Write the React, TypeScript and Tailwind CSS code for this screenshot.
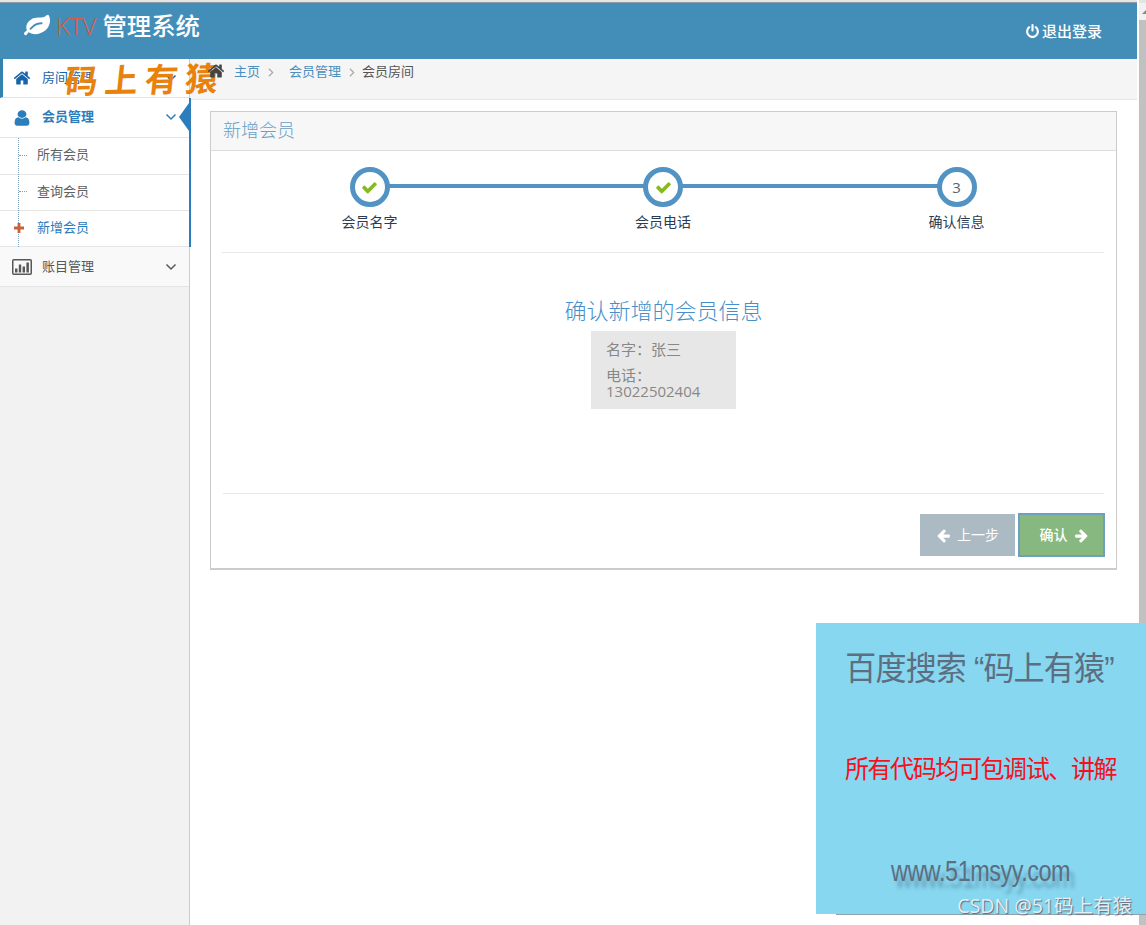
import type { ReactNode } from 'react';

const ICONS = {
  home: 'M1472 992v480q0 26-19 45t-45 19h-384v-384h-256v384h-384q-26 0-45-19t-19-45v-480q0-1 .5-3t.5-3l575-474 575 474q1 2 1 6zm223-69l-62 74q-8 9-21 11h-3q-13 0-21-7l-692-577-692 577q-12 8-24 7-13-2-21-11l-62-74q-8-10-7-23.5t11-21.5l719-599q32-26 76-26t76 26l244 204v-195q0-14 9-23t23-9h192q14 0 23 9t9 23v408l219 182q10 8 11 21.5t-7 23.5z',
  user: 'M1536 1399q0 109-62.5 187t-150.5 78h-854q-88 0-150.5-78t-62.5-187q0-85 8.5-160.5t31.5-152 58.5-131 94-89 134.5-34.5q131 128 313 128t313-128q76 0 134.5 34.5t94 89 58.5 131 31.5 152 8.5 160.5zm-256-887q0 159-112.5 271.5t-271.5 112.5-271.5-112.5-112.5-271.5 112.5-271.5 271.5-112.5 271.5 112.5 112.5 271.5z',
  check: 'M1671 566q0 40-28 68l-724 724-136 136q-28 28-68 28t-68-28l-136-136-362-362q-28-28-28-68t28-68l136-136q28-28 68-28t68 28l294 295 656-657q28-28 68-28t68 28l136 136q28 28 28 68z',
  arrowLeft: 'M1664 896v128q0 53-32.5 90.5t-84.5 37.5h-704l293 294q38 36 38 90t-38 90l-75 76q-37 37-90 37-52 0-91-37l-651-652q-37-37-37-90 0-52 37-91l651-650q38-38 91-38 52 0 90 38l75 74q38 38 38 91t-38 91l-293 293h704q52 0 84.5 37.5t32.5 90.5z',
  arrowRight: 'M1600 960q0 54-37 91l-651 651q-39 37-91 37-51 0-90-37l-75-75q-38-38-38-91t38-91l293-293h-704q-52 0-84.5-37.5t-32.5-90.5v-128q0-53 32.5-90.5t84.5-37.5h704l-293-294q-38-36-38-90t38-90l75-75q38-38 90-38 53 0 91 38l651 651q37 35 37 90z',
  power: 'M1664 896q0 156-61 298t-164 245-245 164-298 61-298-61-245-164-164-245-61-298q0-182 80.5-343t226.5-270q43-32 95.5-25t83.5 50q32 42 24.5 94.5t-49.5 84.5q-98 74-151.5 181t-53.5 228q0 104 40.5 198.5t109.5 163.5 163.5 109.5 198.5 40.5 198.5-40.5 163.5-109.5 109.5-163.5 40.5-198.5q0-121-53.5-228t-151.5-181q-42-32-49.5-84.5t24.5-94.5q31-43 84-50t95 25q146 109 226.5 270t80.5 343zm-640-768v640q0 52-38 90t-90 38-90-38-38-90v-640q0-52 38-90t90-38 90 38 38 90z',
  leaf: 'M1280 704q0-26-19-45t-45-19q-172 0-318 49.5t-259.5 134-235.5 219.5q-19 21-19 45 0 26 19 45t45 19q24 0 45-19 27-24 74-71t67-66q137-124 268.5-176t313.5-52q26 0 45-19t19-45zm512-198q0 95-20 193-46 224-184.5 383t-357.5 268q-214 108-438 108-148 0-286-47-15-5-88-42t-96-37q-16 0-39.5 32t-45 70-52.5 70-60 32q-43 0-63.5-17.5t-45.5-59.5q-2-4-6-11t-5.5-10-3-9.5-1.5-13.5q0-35 31-73.5t68-65.5 68-56 31-48q0-4-14-38t-16-44q-9-51-9-104 0-115 43.5-220t119-184.5 170.5-139 204-95.5q55-18 145-25.5t179.5-9 178.5-6 163.500-24 113.5-56.5l29.5-29.5 29.5-28 27-20 36.5-16 43.5-4.5q39 0 70.500 46t47.5 112 24 124 8 96z',
};

function Icon({ name, className }: { name: keyof typeof ICONS; className: string }) {
  return (
    <svg viewBox="0 0 1792 1792" fill="currentColor" className={className}>
      <path d={ICONS[name]} />
    </svg>
  );
}

function Chevron({ className }: { className: string }) {
  return (
    <svg viewBox="0 0 12 8" fill="none" stroke="currentColor" strokeWidth="1.5" className={className}>
      <path d="M1.500 1.500l4.500 4.500 4.500-4.500" />
    </svg>
  );
}

function ChartIcon() {
  return (
    <svg viewBox="0 0 20 16" fill="currentColor" className="mt-px h-4 w-5">
      <rect x="0.75" y="0.75" width="18.5" height="14.5" rx="1" fill="none" stroke="currentColor" strokeWidth="1.5" />
      <path d="M3 9.500h2.500v4H3zM6.800 5.500h2.400v8H6.800zM10.600 7.500h2.400v6h-2.400zM14.400 3.500h2.500v10h-2.500z" />
    </svg>
  );
}

const subItems = ['所有会员', '查询会员', '新增会员'];

function Sidebar() {
  return (
    <aside className="w-[190px] shrink-0 border-r border-[#ccc] bg-[#f2f2f2] text-[13px] text-[#585858]">
      <div className="flex h-[39px] items-center border-b border-l-3 border-b-[#e5e5e5] border-l-[#3382af] bg-white pl-[10px] text-[#1963aa]">
        <Icon name="home" className="h-[18px] w-[18px]" />
        <span className="ml-[11px] pb-px">房间管理</span>
        <Chevron className="mr-3 ml-auto h-2 w-3" />
      </div>
      <div className="relative -mr-[2px] border-r-2 border-[#2b7dbc] bg-white">
        <div className="flex h-10 items-center border-b border-[#e5e5e5] pl-[13px] font-bold text-[#2b7dbc]">
          <Icon name="user" className="h-[18px] w-[18px] scale-x-115" />
          <span className="ml-[11px] pb-[2px]">会员管理</span>
          <Chevron className="mr-3 mb-px ml-auto h-2 w-3" />
        </div>
        <svg viewBox="0 0 10 28" className="absolute top-[5px] right-0 h-7 w-[10px]">
          <path d="M10 0L0 14l10 14z" fill="#2b7dbc" />
        </svg>
        <ul className="relative">
          <li className="absolute inset-y-0 left-[18px] z-10 border-l border-dotted border-[#7f9fb8]" />
          {subItems.map((item, i) => (
            <li
              key={item}
              className={
                'relative flex items-center border-b border-[#e5e5e5] pb-[2px] pl-[37px] ' +
                (i === 0 ? 'h-[37px] ' : 'h-9 ') +
                (i === 2 ? 'text-[#2b7dbc]' : 'text-[#616161]')
              }
            >
              {i === 2 ? (
                <svg viewBox="0 0 10 10" className="absolute left-[14px] z-20 h-[10px] w-[10px]">
                  <path d="M3.600 0h2.800v3.600H10v2.800H6.400V10H3.600V6.400H0V3.600h3.600z" fill="#c86139" />
                </svg>
              ) : (
                <span className="absolute left-[19px] w-2 border-t border-dotted border-[#7f9fb8]" />
              )}
              {item}
            </li>
          ))}
        </ul>
      </div>
      <div className="flex h-10 items-center border-b border-[#e5e5e5] bg-[#f9f9f9] pl-3">
        <ChartIcon />
        <span className="ml-[10px]">账目管理</span>
        <Chevron className="mr-3 ml-auto h-2 w-3" />
      </div>
    </aside>
  );
}

function Step({ label, children }: { label: string; children: ReactNode }) {
  return (
    <li className="relative z-10 flex w-[293.5px] flex-col items-center">
      <div className="flex h-10 w-10 items-center justify-center rounded-full border-5 border-[#5293c4] bg-white text-[15px] text-[#546474]">
        {children}
      </div>
      <span className="mt-[5px] text-sm leading-5 text-[#2b3d53]">{label}</span>
    </li>
  );
}

function Breadcrumbs() {
  return (
    <nav className="flex h-[41px] items-start border-b border-[#e5e5e5] bg-[#f5f5f5] pt-[2px] pl-[17px] text-[13px] leading-5 text-[#4c8fbd]">
      <Icon name="home" className="relative z-10 mt-px h-[18px] w-[18px] text-[#444]" />
      <span className="ml-[9px]">主页</span>
      <Chevron className="mt-[8px] ml-[6px] h-[7px] w-[10px] -rotate-90 text-[#aaa]" />
      <span className="ml-[13px]">会员管理</span>
      <Chevron className="mt-[8px] ml-[6px] h-[7px] w-[10px] -rotate-90 text-[#aaa]" />
      <span className="ml-[5px] text-[#555]">会员房间</span>
    </nav>
  );
}

function Wizard() {
  return (
    <section className="mt-[11px] mr-5 ml-5 h-[459px] border border-b-2 border-[#ccc] bg-white">
      <h4 className="h-[39px] border-b border-[#ddd] bg-[#f7f7f7] pl-3 text-lg leading-[37px] font-light text-[#669fc7]">新增会员</h4>
      <div className="px-3">
        <ol className="relative -ml-px flex justify-center border-b border-[#e8e8e8] pt-4 pb-[20px]">
          <li className="absolute top-[33px] left-[147px] h-1 w-[587px] bg-[#5293c4]" />
          <Step label="会员名字">
            <Icon name="check" className="h-[17px] w-[17px] text-[#87ba21]" />
          </Step>
          <Step label="会员电话">
            <Icon name="check" className="h-[17px] w-[17px] text-[#87ba21]" />
          </Step>
          <Step label="确认信息">3</Step>
        </ol>
        <div className="flex h-[241px] flex-col items-center border-b border-[#e8e8e8] pt-[41px]">
          <h3 className="text-[22px] leading-8 font-light text-[#478fca]">确认新增的会员信息</h3>
          <div className="mt-[5px] h-[78px] w-[145px] bg-[#e7e7e7] pt-[10px] pl-[15px] text-[15px] leading-4 text-[#888]">
            <p>名字：张三</p>
            <p className="mt-[10px]">电话：</p>
            <p>13022502404</p>
          </div>
        </div>
        <div className="-mr-px flex justify-end gap-[3px] pt-5 text-sm text-white [text-shadow:0_-1px_0_rgba(0,0,0,0.25)]">
          <button className="flex h-[42px] w-[95px] items-center justify-center gap-[6px] bg-[#abbac3]">
            <Icon name="arrowLeft" className="h-[15px] w-[15px]" />
            上一步
          </button>
          <button className="-mt-px flex h-[44px] w-[87px] items-center justify-center gap-[6px] border-2 border-[#6f9fbe] bg-[#87b87f] pl-[5px] font-medium">
            确认
            <Icon name="arrowRight" className="h-[15px] w-[15px]" />
          </button>
        </div>
      </div>
    </section>
  );
}

export default function App() {
  return (
    <div className="relative flex h-[925px] w-[1146px] overflow-hidden bg-white font-['Open_Sans','Noto_Sans_CJK_SC',sans-serif]">
      <div className="flex w-[1137px] flex-col border-t-2 border-[#e4e4e4]">
        <header className="flex h-[57px] shrink-0 justify-between border-t border-[#8a9ba5] bg-[#438eb9] text-white">
          <div className="flex h-[46px] items-center pl-6 text-2xl whitespace-pre">
            <Icon name="leaf" className="mr-[6px] h-[26px] w-[26px]" />
            <span className="font-light text-[#dd5a43]">KTV</span>
            <span className="ml-[6px] text-[24.4px] font-medium">管理系统</span>
          </div>
          <div className="flex h-[57px] items-center gap-[2px] pr-[35px] text-[15px] font-medium">
            <Icon name="power" className="h-[15px] w-[15px]" />
            退出登录
          </div>
        </header>
        <div className="flex grow">
          <Sidebar />
          <main className="grow">
            <Breadcrumbs />
            <Wizard />
          </main>
        </div>
      </div>

      {/* scrollbar */}
      <div className="ml-[2px] flex w-[7px] flex-col border-t-3 border-[#e4e4e4] bg-[#f1f1f1]">
        <div className="flex h-[17px] items-center justify-end">
          <svg viewBox="0 0 4 4" className="h-1 w-1">
            <path d="M4 0v4H0z" fill="#888" />
          </svg>
        </div>
        <div className="grow bg-[#c1c1c1]" />
      </div>

      {/* watermark over the menu */}
      <div className="absolute top-[60px] left-[65px] -skew-x-6 -skew-y-1 text-[33px] leading-10 font-bold tracking-[7px] whitespace-nowrap text-[#e8820c]">
        码上有猿
      </div>

      {/* promo card */}
      <div className="absolute top-[623px] left-[816px] flex h-[291px] w-[330px] flex-col items-center bg-[#87d7f1] font-['Liberation_Sans','Noto_Sans_CJK_SC',sans-serif] whitespace-nowrap text-[#5c6e80]">
        <p className="mt-[22px] -ml-[3px] scale-y-106 text-[31px] leading-[48px] tracking-[-0.8px]">百度搜索 “码上有猿”</p>
        <p className="mt-[57px] -ml-px scale-y-105 text-2xl leading-10 tracking-[-1.4px] text-[#f5101c]">所有代码均可包调试、讲解</p>
        <p className="mt-[61px] scale-x-90 scale-y-110 text-[26px] leading-10 tracking-[-0.5px] [text-shadow:5px_6px_4px_rgba(60,90,110,0.45)]">www.51msyy.com</p>
      </div>
      <div className="absolute top-[914px] left-[836px] h-px w-[310px] bg-[#8aa3ad]" />
      <div className="absolute top-[892px] right-[14px] text-[19.5px] leading-7 whitespace-nowrap text-[#e4eef2] [text-shadow:1px_1px_1px_#667]">
        CSDN @51码上有猿
      </div>
    </div>
  );
}
